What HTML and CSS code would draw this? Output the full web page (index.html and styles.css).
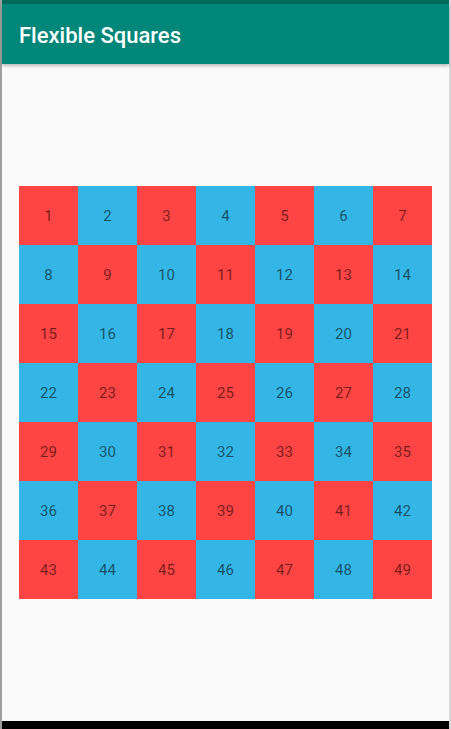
FILE: index.html
```html
<!DOCTYPE html>
<html>
<head>
<meta charset="utf-8">
<link rel="stylesheet" href="styles.css">
</head>
<body>
<div class="screen">
  <div class="status"></div>
  <div class="appbar"><span class="title">Flexible Squares</span></div>
  <div class="content">
    <div class="grid" id="grid"></div>
  </div>
  <div class="navbar"></div>
</div>
<script src="app.js"></script>
</body>
</html>
```
FILE: app.js
```js
var g = document.getElementById('grid');
for (var i = 1; i <= 49; i++) {
  var d = document.createElement('div');
  d.className = 'cell ' + (i % 2 ? 'red' : 'blue');
  d.textContent = i;
  g.appendChild(d);
}
```
FILE: styles.css
```css
html, body {
  margin: 0;
  padding: 0;
  background: #fafafa;
}
.screen {
  width: 451px;
  height: 729px;
  display: flex;
  flex-direction: column;
  border-left: 2px solid #a0a0a0;
  border-right: 2px solid #d8d8d8;
  box-sizing: border-box;
  font-family: Roboto, "Liberation Sans", sans-serif;
}
.status {
  height: 4px;
  background: #00695c;
  flex: none;
}
.appbar {
  height: 60px;
  flex: none;
  background: #00877a;
  display: flex;
  align-items: center;
  padding-left: 17px;
  box-shadow: 0 2px 3px rgba(0,0,0,0.25);
  position: relative;
  z-index: 1;
}
.title {
  color: #fff;
  font-size: 22px;
  font-weight: 500;
  line-height: 1;
  margin-top: 3px;
}
.content {
  flex: 1;
  background: #fafafa;
  display: flex;
  align-items: center;
  justify-content: center;
}
.grid {
  display: grid;
  grid-template-columns: repeat(7, 59px);
  grid-auto-rows: 59px;
}
.cell {
  display: flex;
  align-items: center;
  justify-content: center;
  font-size: 15px;
  color: rgba(0,0,0,0.56);
}
.red { background: #ff4444; }
.blue { background: #33b5e5; }
.navbar {
  height: 8px;
  flex: none;
  background: #000;
}
```
